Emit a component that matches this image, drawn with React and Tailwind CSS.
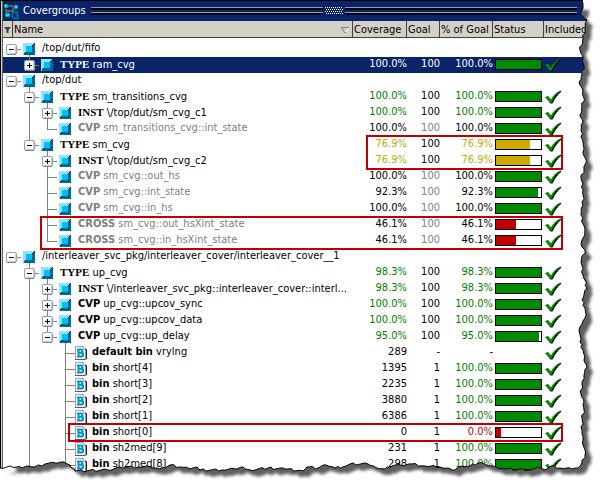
import React from "react";

const G = "text-[#008000]";
const K = "text-black";
const Y = "text-[#c8a800]";
const R = "text-[#c00000]";
const D = "text-[#808080]";

// guides: one entry per 18px tree column. "" blank, "v" line, "t" tee, "l" elbow,
// "+" / "-" expander; "u" / "d" tell whether the line runs above / below it.
const rows = [
  { guides: ["-"], name: "/top/dut/fifo", open: true },
  { guides: ["", "+u"], kind: "TYPE", name: "ram_cvg", cov: "100.0%", goal: "100", pct: "100.0%", bar: 100, selected: true },
  { guides: ["-"], name: "/top/dut", open: true },
  { guides: ["", "-ud"], kind: "TYPE", name: "sm_transitions_cvg", cov: "100.0%", goal: "100", pct: "100.0%", bar: 100, tone: G, open: true },
  { guides: ["", "v", "+ud"], kind: "INST", name: "\\/top/dut/sm_cvg_c1", cov: "100.0%", goal: "100", pct: "100.0%", bar: 100, tone: G },
  { guides: ["", "v", "l"], kind: "CVP", dim: true, name: "sm_transitions_cvg::int_state", cov: "100.0%", goal: "100", pct: "100.0%", bar: 100 },
  { guides: ["", "-u"], kind: "TYPE", name: "sm_cvg", cov: "76.9%", goal: "100", pct: "76.9%", bar: 76, tone: Y, open: true },
  { guides: ["", "", "+ud"], kind: "INST", name: "\\/top/dut/sm_cvg_c2", cov: "76.9%", goal: "100", pct: "76.9%", bar: 76, tone: Y },
  { guides: ["", "", "t"], kind: "CVP", dim: true, name: "sm_cvg::out_hs", cov: "100.0%", goal: "100", pct: "100.0%", bar: 100 },
  { guides: ["", "", "t"], kind: "CVP", dim: true, name: "sm_cvg::int_state", cov: "92.3%", goal: "100", pct: "92.3%", bar: 93 },
  { guides: ["", "", "t"], kind: "CVP", dim: true, name: "sm_cvg::in_hs", cov: "100.0%", goal: "100", pct: "100.0%", bar: 100 },
  { guides: ["", "", "t"], kind: "CROSS", dim: true, name: "sm_cvg::out_hsXint_state", cov: "46.1%", goal: "100", pct: "46.1%", bar: 45 },
  { guides: ["", "", "l"], kind: "CROSS", dim: true, name: "sm_cvg::in_hsXint_state", cov: "46.1%", goal: "100", pct: "46.1%", bar: 45 },
  { guides: ["-"], name: "/interleaver_svc_pkg/interleaver_cover/interleaver_cover__1", open: true },
  { guides: ["", "-ud"], kind: "TYPE", name: "up_cvg", cov: "98.3%", goal: "100", pct: "98.3%", bar: 100, tone: G, open: true },
  { guides: ["", "v", "+ud"], kind: "INST", name: "\\/interleaver_svc_pkg::interleaver_cover::interl...", cov: "98.3%", goal: "100", pct: "98.3%", bar: 100, tone: G },
  { guides: ["", "v", "+ud"], kind: "CVP", name: "up_cvg::upcov_sync", cov: "100.0%", goal: "100", pct: "100.0%", bar: 100, tone: G },
  { guides: ["", "v", "+ud"], kind: "CVP", name: "up_cvg::upcov_data", cov: "100.0%", goal: "100", pct: "100.0%", bar: 100, tone: G },
  { guides: ["", "v", "-u"], kind: "CVP", name: "up_cvg::up_delay", cov: "95.0%", goal: "100", pct: "95.0%", bar: 95, tone: G, open: true },
  { guides: ["", "v", "", "t"], bin: true, kind: "default bin", name: "vrylng", cov: "289", goal: "-", pct: "-" },
  { guides: ["", "v", "", "t"], bin: true, kind: "bin", name: "short[4]", cov: "1395", goal: "1", pct: "100.0%", bar: 100 },
  { guides: ["", "v", "", "t"], bin: true, kind: "bin", name: "short[3]", cov: "2235", goal: "1", pct: "100.0%", bar: 100 },
  { guides: ["", "v", "", "t"], bin: true, kind: "bin", name: "short[2]", cov: "3880", goal: "1", pct: "100.0%", bar: 100 },
  { guides: ["", "v", "", "t"], bin: true, kind: "bin", name: "short[1]", cov: "6386", goal: "1", pct: "100.0%", bar: 100 },
  { guides: ["", "v", "", "t"], bin: true, kind: "bin", name: "short[0]", cov: "0", goal: "1", pct: "0.0%", bar: 10 },
  { guides: ["", "v", "", "t"], bin: true, kind: "bin", name: "sh2med[9]", cov: "231", goal: "1", pct: "100.0%", bar: 100 },
  { guides: ["", "v", "", "t"], bin: true, kind: "bin", name: "sh2med[8]", cov: "298", goal: "1", pct: "100.0%", bar: 100 },
];

function Guide({ kind }) {
  const box = kind[0] === "+" || kind[0] === "-";
  const up = kind.includes("u") || kind === "v" || kind === "t" || kind === "l";
  const down = kind.includes("d") || kind === "v" || kind === "t";
  return (
    <svg width="18" height="16" viewBox="0 0 18 16" className="shrink-0" shapeRendering="crispEdges" aria-hidden="true">
      {up && <path d="M8.5 0V9" stroke="#808080" />}
      {down && <path d="M8.5 8V16" stroke="#808080" />}
      {kind !== "" && kind !== "v" && <path d="M8 8.5H18" stroke="#808080" />}
      {box && (
        <g shapeRendering="auto">
          <rect x="3.5" y="3.5" width="10" height="10" rx="1.5" fill="#fff" stroke="#98a0b8" />
          <path d="M5 12.5H13M12.5 5V13" stroke="#c4c8d8" />
          <path d="M4 13.5H13" stroke="#7c84a0" />
          <path d="M6 8.5H11" stroke="#000" />
          {kind[0] === "+" && <path d="M8.5 6V11" stroke="#000" />}
        </g>
      )}
    </svg>
  );
}

function Cube({ open }) {
  return (
    <svg width="14" height="16" viewBox="0 0 14 16" className="shrink-0" shapeRendering="crispEdges" aria-hidden="true">
      {open && <path d="M8.5 13V16" stroke="#808080" />}
      <rect x="2" y="2" width="12" height="12" fill="#8ce6f8" />
      <path d="M14 2V14H2L5 11H11V5Z" fill="#006a94" />
      <path d="M13.5 2.5L11 5M2.5 13.5L5 11" stroke="#00202c" />
      <rect x="5" y="5" width="6" height="6" fill="#00bff3" />
    </svg>
  );
}

function BinIcon() {
  return (
    <svg width="14" height="16" viewBox="0 0 14 16" className="shrink-0" aria-hidden="true">
      <path d="M.5 1.5H8L10.5 4V14.5H.5Z" fill="#fff" stroke="#9c9cb0" />
      <path d="M8 1.5V4H10.5" fill="none" stroke="#9c9cb0" />
      <path d="M10 4.5H11.5V14" fill="none" stroke="#202030" />
      <path d="M0 14.5H11" stroke="#505078" />
      <path d="M3.5 4V12M2 4.500H5.700Q7.500 4.500 7.500 6.100Q7.500 7.800 5.500 7.800H4M5.500 7.800Q8.200 7.800 8.200 9.700Q8.200 11.500 6 11.500H2" fill="none" stroke="#0095d0" strokeWidth="2" />
    </svg>
  );
}

function Check() {
  return (
    <svg width="17" height="16" viewBox="0 0 17 16" className="block" aria-hidden="true">
      <path d="M1.5 9.5L3.500 8L6.500 11.500Q10 5 16 1.500V3Q11 7 7.500 14.500H5.500Z" fill="#000" />
      <path d="M0 8.200L3 6.700L5.700 10.800Q9 4.500 15.500 1Q10 6 6.500 13.500H4.500Q3 10 0 8.200Z" fill="#009000" />
    </svg>
  );
}

function barColor(n) {
  if (n < 50) return "bg-[#c00000]";
  return n < 80 ? "bg-[#ccaa00]" : "bg-[#008a00]";
}

function TreeRow({ row }) {
  const slab = row.kind === "TYPE" || row.kind === "INST";
  const sel = row.selected;
  const tone = sel ? "text-white" : row.tone || K;
  const pctTone = sel ? "text-white" : row.bin && row.bar ? (row.bar < 50 ? R : G) : tone;
  const nameTone = sel ? "text-white" : row.dim ? D : K;
  return (
    <tr className={`h-4 align-top leading-[14px] ${sel ? "bg-[#0a246a]" : ""}`}>
      <td colSpan={2} className="p-0">
        <div className={`flex h-4 items-start whitespace-nowrap ${nameTone}`}>
          {row.guides.map((g, i) => <Guide key={i} kind={g} />)}
          {row.bin ? <BinIcon /> : <Cube open={row.open} />}
          <span className={row.bin ? "pl-[3px]" : "pl-[7px]"}>
            {row.kind && <b className={slab ? "font-['Liberation_Serif',serif] text-[11px]" : "font-bold"}>{row.kind}</b>}
            {row.kind && " "}
            {row.name}
          </span>
        </div>
      </td>
      <td className={`p-0 text-right ${tone}`}>{row.cov}</td>
      <td className={`p-0 text-right ${row.dim ? D : sel ? "text-white" : K}`}>{row.goal}</td>
      <td className={`p-0 text-right ${pctTone}`}>{row.pct}</td>
      <td className="p-0 pl-[2px] pt-[2px]">
        {row.bar && (
          <div className="h-[11px] w-[47px] border border-black bg-white">
            <div className={`h-full ${barColor(row.bar)}`} style={{ width: `${row.bar}%` }} />
          </div>
        )}
      </td>
      <td className="p-0 pl-px">{row.cov && <Check />}</td>
    </tr>
  );
}

const tear = [
  [583, -4], [583, 5], [583, 8], [580, 14], [587, 20], [585, 30], [583, 38], [580, 50], [583, 58], [584, 66], [582, 74],
  [579, 82], [583, 91], [584, 98], [582, 106], [580, 115], [583, 122], [581, 131], [583, 142], [583, 152], [586, 163],
  [584, 170], [581, 178], [583, 190], [583, 205], [581, 215], [585, 230], [583, 238], [581, 244], [585, 250], [581, 262],
  [583, 275], [587, 288], [582, 300], [585, 308], [585, 318], [580, 327], [580, 342], [583, 350], [584, 360], [587, 367],
  [584, 375], [582, 382], [581, 394], [584, 402], [584, 410], [582, 418], [582, 430], [583, 440], [585, 455], [582, 463],
  [578, 468], [572, 469], [560, 468], [551, 466], [545, 470], [541, 468], [528, 470], [505, 469], [496, 467], [485, 464],
  [478, 463], [470, 466], [462, 466], [452, 470], [440, 467], [425, 466], [412, 464], [400, 465], [392, 466], [385, 469],
  [375, 467], [368, 464], [350, 464], [346, 466], [335, 468], [326, 465], [318, 468], [307, 467], [303, 471], [285, 469],
  [268, 468], [250, 470], [243, 467], [235, 469], [222, 470], [200, 470], [197, 467], [190, 469], [180, 467], [170, 465],
  [160, 469], [150, 467], [138, 467], [128, 467], [120, 467], [108, 470], [75, 471], [70, 465], [64, 462], [55, 463],
  [45, 464], [35, 467], [28, 466], [22, 468], [17, 467], [10, 466], [0, 468],
];

// Splits every segment of the tear into short steps with a small zigzag.
function roughen(points) {
  const out = [points[0]];
  for (let i = 1; i < points.length; i++) {
    const [x0, y0] = points[i - 1];
    const [x1, y1] = points[i];
    const n = Math.max(1, Math.round(Math.hypot(x1 - x0, y1 - y0) / 3));
    const vertical = Math.abs(y1 - y0) > Math.abs(x1 - x0);
    for (let j = 1; j <= n; j++) {
      const k = ((i * 7 + j * 5) % 4) - 1.5;
      const off = j === n ? 0 : k * 0.7;
      out.push([x0 + ((x1 - x0) * j) / n + (vertical ? off : 0), y0 + ((y1 - y0) * j) / n + (vertical ? 0 : off)]);
    }
  }
  return out.map((p) => p.join(" ")).join("L");
}

function TornEdge() {
  const line = roughen(tear);
  const sheet = `M-9 -4L${line}L-9 468Z`;
  const outside = `M-20 -20H640V520H-20Z${sheet}`;
  return (
    <svg width="602" height="486" viewBox="0 0 602 486" className="pointer-events-none absolute left-0 top-0" aria-hidden="true">
      <defs>
        <clipPath id="outside"><path d={outside} clipRule="evenodd" /></clipPath>
        <filter id="soft" x="-5%" y="-5%" width="110%" height="110%"><feGaussianBlur stdDeviation="1.6" /></filter>
      </defs>
      <path d={outside} fill="#fff" fillRule="evenodd" />
      <g clipPath="url(#outside)">
        <path d={`M10 4L${line.replace(/^[^L]*L/, "583 4L")}L10 468Z`} transform="translate(6 6)" fill="#606060" filter="url(#soft)" />
      </g>
      <path d={`M${line}`} fill="none" stroke="#000" />
    </svg>
  );
}

function Grip() {
  return (
    <div className="flex h-2 flex-1 flex-col justify-between">
      <div className="h-[3px] border-b-2 border-t border-b-black border-t-[#8c98bc]" />
      <div className="h-[3px] border-b-2 border-t border-b-black border-t-[#8c98bc]" />
    </div>
  );
}

function TitleIcon() {
  return (
    <svg width="17" height="17" viewBox="0 0 17 17" className="shrink-0" aria-hidden="true">
      <path d="M5 3H12M10 4V8H5V12M3 6V11" stroke="#777" strokeWidth="1.500" fill="none" />
      <path d="M1 1H5V5H1ZM11 2H15V6H11ZM2 10H7V14H2Z" fill="#00f0ff" stroke="#003848" strokeWidth=".8" />
      <path d="M15.500 10.500Q14 9 12 9Q9 9.500 9 12.500Q9.500 15.500 12.500 15.500H15V12.500H12.500" fill="none" stroke="#006c94" strokeWidth="1.800" />
    </svg>
  );
}

const head =
  "h-[17px] border-b border-r border-[#404040] bg-[#d4d0c8] p-0 pl-px pt-[2px] text-left font-normal leading-[14px]";

export default function App() {
  return (
    <main className="relative h-screen overflow-hidden bg-white font-['DejaVu_Sans_Condensed','DejaVu_Sans',sans-serif] text-[11px] leading-4 text-black">
      <section className="h-full border-l border-t border-black bg-[#d4d0c8] pl-px">
        <div className="h-full border-l border-[#606060] bg-white">
          <header className="flex h-5 items-center bg-[#0a246a] pr-[25px] text-white">
            <TitleIcon />
            <h1 className="pl-[3px] pr-[5px] text-[11px]">Covergroups</h1>
            <Grip />
            <svg width="22" height="8" viewBox="0 0 22 8" shapeRendering="crispEdges" className="shrink-0" aria-hidden="true">
              {[0, 1, 2, 3].map((r) =>
                [0, 1, 2, 3, 4, 5, 6, 7, 8].map((c) => (
                  <rect key={`${r}-${c}`} x={2 + c * 2 + (r % 2)} y={r * 2} width="1" height="1" fill="#fff" />
                ))
              )}
            </svg>
            <Grip />
          </header>
          <table className="w-full table-fixed border-separate border-spacing-0">
            <colgroup>
              <col className="w-[10px]" />
              <col className="w-[340px]" />
              <col className="w-[54px]" />
              <col className="w-[33px]" />
              <col className="w-[53px]" />
              <col className="w-[51px]" />
              <col />
            </colgroup>
            <thead>
              <tr>
                <th className={head} aria-label="Filter">
                  <svg width="8" height="8" viewBox="0 0 8 8" aria-hidden="true"><path d="M0 1H7L4.500 4V7H2.500V4Z" fill="#404040" /></svg>
                </th>
                <th className={head}>
                  <div className="flex items-center justify-between pr-[2px]">
                    Name
                    <svg width="9" height="8" viewBox="0 0 9 8" aria-hidden="true">
                      <path d="M8 1.500L5 6.500" stroke="#fff" />
                      <path d="M8 1.500H.5L3.500 6.500H5" fill="none" stroke="#808080" />
                    </svg>
                  </div>
                </th>
                <th className={head}>Coverage</th>
                <th className={head}>Goal</th>
                <th className={`${head} whitespace-nowrap`}>% of Goal</th>
                <th className={head}>Status</th>
                <th className={head}>Included</th>
              </tr>
            </thead>
            <tbody>
              <tr className="h-[3px]"><td colSpan={7} className="p-0" /></tr>
              {rows.map((row, i) => <TreeRow key={i} row={row} />)}
            </tbody>
          </table>
        </div>
      </section>
      <div className="pointer-events-none absolute left-[366px] top-[135px] h-[35px] w-[197px] border-2 border-[#c00000]" />
      <div className="pointer-events-none absolute left-10 top-[216px] h-[34px] w-[523px] border-2 border-[#c00000]" />
      <div className="pointer-events-none absolute left-[68px] top-[423px] h-[19px] w-[495px] border-2 border-[#c00000]" />
      <TornEdge />
    </main>
  );
}
